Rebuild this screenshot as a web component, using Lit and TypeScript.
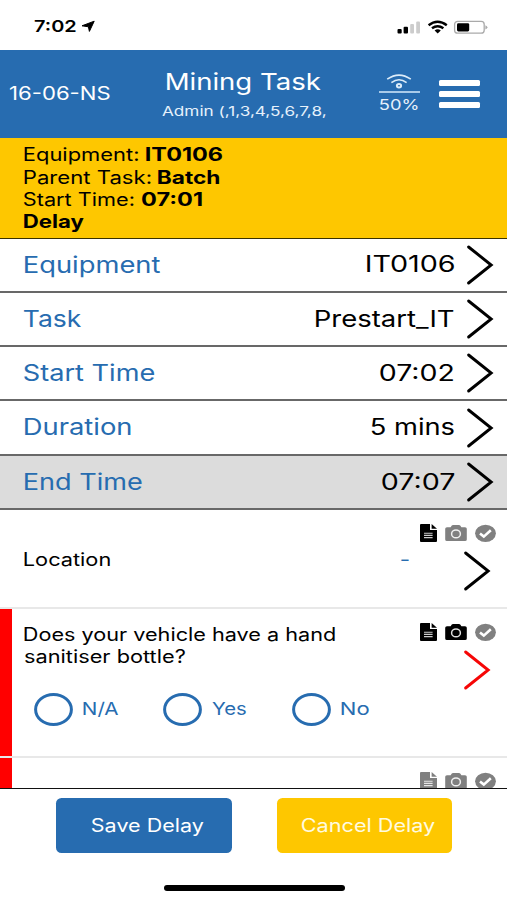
import { LitElement, html, css } from "lit";
import { customElement, property, state } from "lit/decorators.js";
import { styleMap } from "lit/directives/style-map.js";

const FONT = 'Inter, Roboto, "Liberation Sans", sans-serif';

/** One line of text whose inked width is stretched to `w` pixels. */
@customElement("fit-text")
class FitText extends LitElement {
  @property() text = "";
  @property({ type: Number }) w = 100;
  @property({ type: Number }) size = 18;
  @property({ type: Number }) weight = 400;

  static styles = css`
    :host {
      display: block;
      flex: none;
    }
    .box {
      display: block;
    }
    .glyphs {
      display: inline-block;
      white-space: pre;
      transform-origin: 0 50%;
      line-height: inherit;
      vertical-align: top;
    }
  `;

  render() {
    const ctx = document.createElement("canvas").getContext("2d")!;
    ctx.font = `${this.weight} ${this.size}px ${FONT}`;
    const m = ctx.measureText(this.text);
    const ink = m.actualBoundingBoxLeft + m.actualBoundingBoxRight;
    const k = this.w / (ink || 1);
    return html`<span class="box" style=${styleMap({ width: `${this.w}px` })}
      ><span
        class="glyphs"
        style=${styleMap({
          fontSize: `${this.size}px`,
          fontWeight: String(this.weight),
          transform: `scaleX(${k}) translateX(${m.actualBoundingBoxLeft}px)`,
        })}
        >${this.text}</span
      ></span
    >`;
  }
}

const t = (text: string, w: number, size: number, weight = 400) =>
  html`<fit-text .text=${text} .w=${w} .size=${size} .weight=${weight}></fit-text>`;

const chevron = html`<svg class="chevron" width="28" height="42" viewBox="0 0 28 42">
  <path d="M2.6 3 25.2 21 2.6 39" fill="none" stroke="currentColor" stroke-width="2.9" stroke-linecap="round" />
</svg>`;

const docIcon = (c: string) => html`<svg width="17" height="18" viewBox="0 0 17 18">
  <path d="M1 0H10V6H17V17Q17 18 16 18H1Q0 18 0 17V1Q0 0 1 0Z" fill=${c} />
  <path d="M11.6 0 17 4.7H11.6Z" fill=${c} />
  <path d="M4 9.2H12.6M4 11.4H12.6M4 13.6H12.6" stroke="#fff" stroke-opacity=".8" stroke-width="1.1" />
</svg>`;

const cameraIcon = (c: string) => html`<svg width="22" height="18" viewBox="0 0 22 18">
  <path d="M2 3.2H5.6L6.8 1.4Q7.2 .9 8 .9H14Q14.8 .9 15.2 1.4L16.4 3.2H20Q21.8 3.2 21.8 4.8V15.4Q21.8 17 20 17H2Q.2 17 .2 15.4V4.8Q.2 3.2 2 3.2Z" fill=${c} />
  <ellipse cx="11" cy="9.9" rx="4.4" ry="3.9" fill="none" stroke="#fff" stroke-opacity=".88" stroke-width="1.5" />
</svg>`;

const checkIcon = html`<svg width="21" height="18" viewBox="0 0 21 18">
  <ellipse cx="10.5" cy="9.3" rx="10.4" ry="8.6" fill="#808080" />
  <path d="M5 9.4 8.8 12.6 15.8 6.2" fill="none" stroke="#fff" stroke-width="2.6" />
</svg>`;

interface Row { label: string; lw: number; value: string; vw: number; muted?: boolean }

@customElement("app-root")
class AppRoot extends LitElement {
  @state() rows: Row[] = [
    { label: "Equipment", lw: 136, value: "IT0106", vw: 88.5 },
    { label: "Task", lw: 57, value: "Prestart_IT", vw: 139 },
    { label: "Start Time", lw: 130, value: "07:02", vw: 74 },
    { label: "Duration", lw: 107, value: "5 mins", vw: 83 },
    { label: "End Time", lw: 117.5, value: "07:07", vw: 72.5, muted: true },
  ];

  static styles = css`
    :host {
      display: flex;
      flex-direction: column;
      width: 507px;
      height: 900px;
      overflow: hidden;
      background: #fff;
      color: #000;
      font-family: Inter, Roboto, "Liberation Sans", sans-serif;
      line-height: 22.3px;
    }
    svg {
      display: block;
      flex: none;
    }
    .status {
      display: flex;
      align-items: center;
      height: 50px;
      flex: none;
      box-sizing: border-box;
      padding: 3px 18px 0 34px;
    }
    .arrow {
      margin-left: 5px;
    }
    .signals {
      margin-left: auto;
    }
    .header {
      display: flex;
      align-items: center;
      height: 88px;
      flex: none;
      box-sizing: border-box;
      padding: 0 27px 0 9px;
      background: #276cb0;
      color: #fff;
    }
    .date {
      width: 152.5px;
    }
    .titles {
      display: flex;
      flex-direction: column;
      gap: 0.5px;
      width: 164px;
      line-height: 28px;
      padding-top: 5px;
    }
    .title {
      padding-left: 5px;
    }
    .user {
      color: #e6f1fb;
    }
    .link {
      display: flex;
      flex-direction: column;
      align-items: center;
      width: 41px;
      margin-left: 53px;
      padding-top: 3px;
      color: #e6f1fb;
    }
    .rule {
      width: 41px;
      height: 2px;
      margin: 2px 0 1px;
      background: #a9cbe9;
    }
    .menu {
      display: grid;
      gap: 5px;
      width: 41px;
      margin-left: auto;
    }
    .bar {
      height: 6px;
      border-radius: 1.5px;
      background: #fff;
    }
    .info {
      height: 100.5px;
      flex: none;
      box-sizing: border-box;
      padding: 5.3px 0 0 23.5px;
      background: #fec700;
      border-bottom: 1px solid #3a3200;
    }
    .line {
      display: flex;
      gap: 8px;
    }
    .row {
      display: flex;
      align-items: center;
      justify-content: space-between;
      height: 54.3px;
      flex: none;
      box-sizing: border-box;
      padding: 0 13px 0 23.5px;
      border-bottom: 2px solid #686868;
    }
    .muted {
      background: #dcdcdc;
    }
    .label,
    .blue {
      color: #276cb0;
    }
    .value {
      display: flex;
      align-items: center;
      gap: 12px;
    }
    .list {
      height: 279px;
      flex: none;
      box-sizing: border-box;
      overflow: hidden;
      border-bottom: 1px solid #111;
    }
    .item {
      display: grid;
      grid-template-columns: minmax(0, 1fr) 98px;
      box-sizing: border-box;
      border-bottom: 2px solid #e8e8e8;
    }
    .location {
      height: 99px;
    }
    .question {
      height: 149px;
    }
    .next {
      height: 60px;
    }
    .required {
      background: linear-gradient(90deg, #f00 11.7px, #fff 11.7px);
    }
    .place {
      display: flex;
      justify-content: space-between;
      padding: 39px 1px 0 23.5px;
    }
    .ask {
      padding: 15px 0 0 23.5px;
    }
    .side {
      display: flex;
      flex-direction: column;
      align-items: flex-end;
      padding-top: 14px;
    }
    .icons {
      display: flex;
      gap: 8px;
      padding-right: 11px;
    }
    .side .chevron {
      margin: 8px 16px 0 0;
    }
    .red {
      color: #f60606;
    }
    .options {
      display: flex;
      padding: 24px 0 0 10.5px;
    }
    .option {
      display: flex;
      align-items: center;
      gap: 10px;
      width: 129px;
      flex: none;
    }
    .footer {
      display: flex;
      gap: 45px;
      padding: 9px 0 0 56px;
      flex: none;
    }
    .button {
      display: flex;
      align-items: center;
      justify-content: flex-end;
      width: 175.5px;
      height: 55px;
      box-sizing: border-box;
      border-radius: 5.5px;
      color: #fff;
    }
    .save {
      background: #276cb0;
      padding-right: 28px;
    }
    .cancel {
      background: #fec700;
      padding-right: 17.5px;
      color: #fffbe0;
    }
    .home {
      width: 181px;
      height: 6px;
      margin: 32px 0 0 163.5px;
      border-radius: 3px;
      background: #000;
      flex: none;
    }
  `;

  icons(doc: string, cam: string) {
    return html`<div class="icons">${docIcon(doc)}${cameraIcon(cam)}${checkIcon}</div>`;
  }

  option(label: string, w: number) {
    return html`<div class="option blue">
      <svg width="39" height="33" viewBox="0 0 39 33">
        <ellipse cx="19.5" cy="16.5" rx="17.9" ry="15" fill="none" stroke="#276cb0" stroke-width="3" />
      </svg>
      ${t(label, w, 17.5)}
    </div>`;
  }

  render() {
    return html`
      <div class="status">
        ${t("7:02", 41.5, 16, 600)}
        <svg class="arrow" width="15" height="13" viewBox="0 0 15 13">
          <path d="M13.2 1.2 8.4 11.4 7.4 6.8 1 5.8Z" fill="#000" stroke="#000" stroke-width="1" stroke-linejoin="round" />
        </svg>
        <svg class="signals" width="92" height="16" viewBox="0 0 92 16">
          <rect x=".5" y="10" width="4.2" height="4.5" rx="1" />
          <rect x="6.6" y="7.8" width="4.4" height="6.7" rx="1" />
          <rect x="13.2" y="5" width="3.8" height="9.5" rx="1" fill="#ccc" />
          <rect x="19.2" y="2.4" width="3.8" height="12.1" rx="1" fill="#ccc" />
          <path d="M31.6 6.2Q40.5-.8 49.8 6.2M35 9.3Q40.6 5 46.4 9.3" fill="none" stroke="#000" stroke-width="2.4" />
          <path d="M37.6 11.6Q40.7 9 43.8 11.6L40.7 14.4Z" />
          <rect x="57.6" y="2.4" width="29.6" height="11.8" rx="3" fill="none" stroke="#aaa" stroke-width="1.3" />
          <rect x="60" y="4.2" width="12.2" height="8.2" rx="1.4" />
          <path d="M88.4 6.2Q90.4 7 90.4 8.3T88.4 10.4Z" fill="#aaa" />
        </svg>
      </div>
      <div class="header">
        <div class="date">${t("16-06-NS", 101, 18)}</div>
        <div class="titles">
          <div class="title">${t("Mining Task", 154, 23.4)}</div>
          <div class="user">${t("Admin (,1,3,4,5,6,7,8,", 163.5, 13.3)}</div>
        </div>
        <div class="link">
          <svg width="26" height="15" viewBox="0 0 26 15" fill="none" stroke="#dcecf9" stroke-width="1.6">
            <path d="M1.2 5.2Q13-3 24.8 5.2M5.4 8.6Q13 2.8 20.6 8.6" />
            <ellipse cx="13" cy="11.8" rx="2.1" ry="1.7" stroke-width="2" />
          </svg>
          <div class="rule"></div>
          ${t("50%", 38.5, 15)}
        </div>
        <div class="menu"><div class="bar"></div><div class="bar"></div><div class="bar"></div></div>
      </div>
      <div class="info">
        <div class="line">${t("Equipment:", 114, 18.2)}${t("IT0106", 76, 18.2, 700)}</div>
        <div class="line">${t("Parent Task:", 126.5, 18.2)}${t("Batch", 62, 18.2, 700)}</div>
        <div class="line">${t("Start Time:", 109.5, 18.2)}${t("07:01", 61, 18.2, 700)}</div>
        <div class="line">${t("Delay", 60, 18.2, 700)}</div>
      </div>
      ${this.rows.map(
        (r) => html`<div class="row ${r.muted ? "muted" : ""}">
          <div class="label">${t(r.label, r.lw, 22.4)}</div>
          <div class="value">${t(r.value, r.vw, 22.4)}${chevron}</div>
        </div>`
      )}
      <div class="list">
        <div class="item location">
          <div class="place">${t("Location", 86.5, 18)}<div class="blue">${t("-", 7.5, 18)}</div></div>
          <div class="side">${this.icons("#000", "#808080")}${chevron}</div>
        </div>
        <div class="item question required">
          <div class="ask">
            ${t("Does your vehicle have a hand", 311, 18)}${t("sanitiser bottle?", 161.5, 18)}
            <div class="options">${this.option("N/A", 35.5)}${this.option("Yes", 34.5)}${this.option("No", 28)}</div>
          </div>
          <div class="side red">${this.icons("#000", "#000")}${chevron}</div>
        </div>
        <div class="item next required">
          <div></div>
          <div class="side">${this.icons("#808080", "#808080")}</div>
        </div>
      </div>
      <div class="footer">
        <div class="button save">${t("Save Delay", 111.5, 18.2)}</div>
        <div class="button cancel">${t("Cancel Delay", 133, 18.2)}</div>
      </div>
      <div class="home"></div>
    `;
  }
}
